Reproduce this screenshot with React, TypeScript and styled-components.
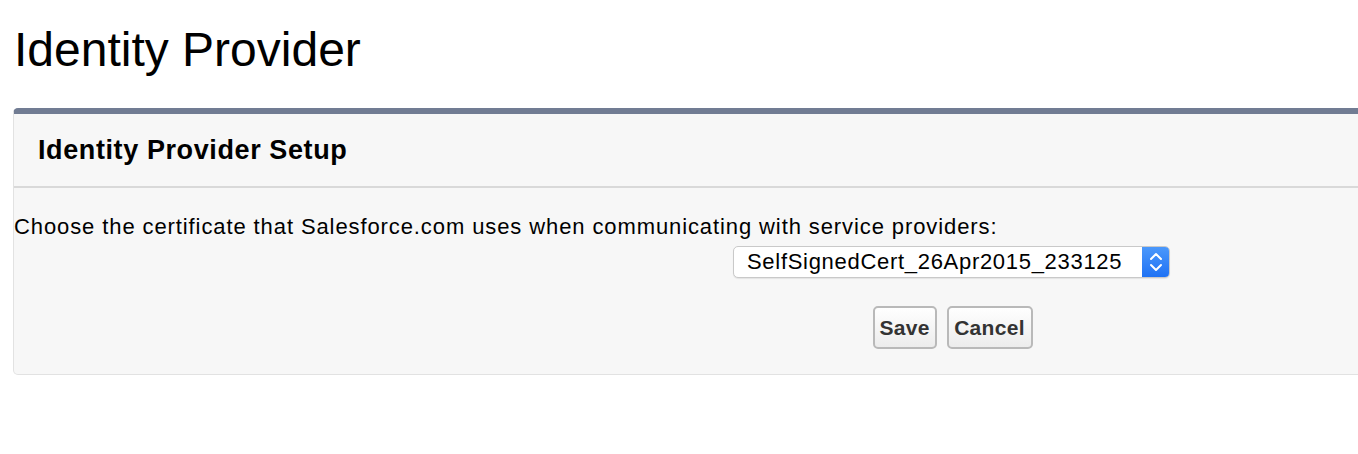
import React from "react";
import styled, { createGlobalStyle } from "styled-components";

const GlobalStyle = createGlobalStyle`
  html, body {
    margin: 0;
    padding: 0;
    background: #ffffff;
    overflow: hidden;
  }
  body {
    font-family: "Liberation Sans", Arial, sans-serif;
    color: #000;
  }
`;

const Page = styled.div`
  padding: 22px 0 0 13px;
  width: 1358px;
  box-sizing: border-box;
`;

const Title = styled.h1`
  margin: 0 0 0 1px;
  font-size: 48px;
  font-weight: 400;
  line-height: 56px;
  color: #000;
`;

const Panel = styled.section`
  margin-top: 30px;
  margin-right: -30px;
  background: #f7f7f7;
  border: 1px solid #e2e2e2;
  border-top: 6px solid #717c93;
  border-radius: 5px;
`;

const PanelHeader = styled.div`
  height: 72px;
  display: flex;
  align-items: center;
  padding-left: 24px;
  border-bottom: 2px solid #d9d9d9;
`;

const PanelTitle = styled.h2`
  margin: 0;
  font-size: 27px;
  letter-spacing: 0.6px;
  font-weight: 700;
  color: #000;
`;

const PanelBody = styled.div`
  padding: 24px 0 25px 0;
`;

const Prompt = styled.p`
  margin: 0;
  font-size: 22px;
  letter-spacing: 0.9px;
  line-height: 30px;
  color: #000;
`;

const Fields = styled.div`
  margin-left: 719px;
  margin-top: 4px;
  width: 437px;
  display: flex;
  flex-direction: column;
`;

const SelectBox = styled.div`
  height: 30px;
  display: flex;
  align-items: stretch;
  border: 1px solid #c9c9c9;
  border-radius: 5px;
  background: #ffffff;
  box-shadow: 0 1px 1px rgba(0, 0, 0, 0.08);
  overflow: hidden;
`;

const SelectValue = styled.div`
  flex: 1;
  display: flex;
  align-items: center;
  padding-left: 13px;
  font-size: 22px;
  letter-spacing: 0.7px;
  color: #000;
`;

const Stepper = styled.div`
  width: 27px;
  display: flex;
  align-items: center;
  justify-content: center;
  background: linear-gradient(#4b98fb, #1f72f4);
`;

const Actions = styled.div`
  display: flex;
  justify-content: center;
  gap: 10px;
  margin-top: 28px;
  padding-left: 2px;
`;

const Button = styled.button<{ $width: number }>`
  width: ${(p) => p.$width}px;
  height: 43px;
  padding: 0;
  font-family: "Liberation Sans", Arial, sans-serif;
  font-size: 21px;
  letter-spacing: 0.3px;
  font-weight: 700;
  color: #333333;
  border: 2px solid #b9b9b9;
  border-radius: 5px;
  background: linear-gradient(#ffffff, #ececec);
  cursor: pointer;
`;

const Chevrons = () => (
  <svg width="14" height="22" viewBox="0 0 14 22" fill="none">
    <path
      d="M2 8 L7 3 L12 8"
      stroke="#ffffff"
      strokeWidth="2"
      strokeLinecap="round"
      strokeLinejoin="round"
    />
    <path
      d="M2 14 L7 19 L12 14"
      stroke="#ffffff"
      strokeWidth="2"
      strokeLinecap="round"
      strokeLinejoin="round"
    />
  </svg>
);

export default function App() {
  return (
    <>
      <GlobalStyle />
      <Page>
        <Title>Identity Provider</Title>
        <Panel>
          <PanelHeader>
            <PanelTitle>Identity Provider Setup</PanelTitle>
          </PanelHeader>
          <PanelBody>
            <Prompt>
              Choose the certificate that Salesforce.com uses when communicating
              with service providers:
            </Prompt>
            <Fields>
              <SelectBox>
                <SelectValue>SelfSignedCert_26Apr2015_233125</SelectValue>
                <Stepper>
                  <Chevrons />
                </Stepper>
              </SelectBox>
              <Actions>
                <Button $width={64}>Save</Button>
                <Button $width={86}>Cancel</Button>
              </Actions>
            </Fields>
          </PanelBody>
        </Panel>
      </Page>
    </>
  );
}
